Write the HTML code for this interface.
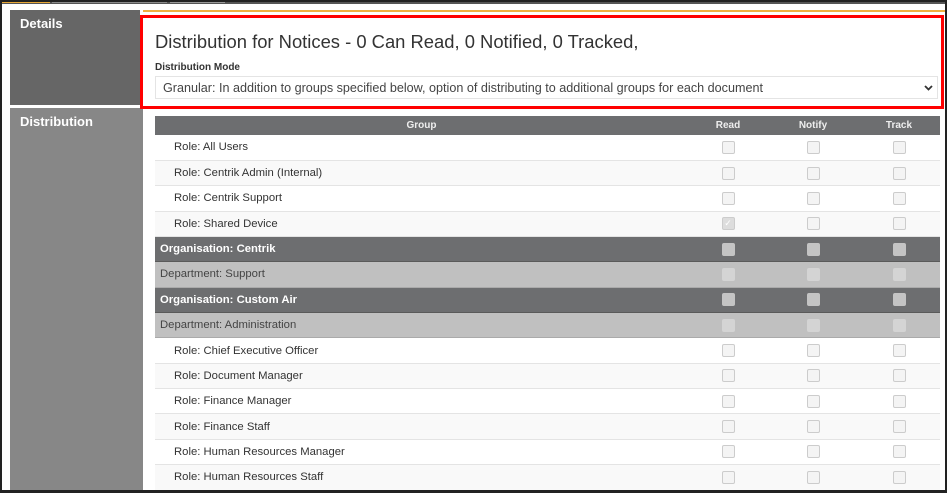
<!DOCTYPE html>
<html><head><style>
body{margin:0;width:947px;height:492px;overflow:hidden;background:#fff;font-family:"Liberation Sans",Arial,sans-serif;position:relative}
.frame{position:absolute;left:0;top:0;width:943px;height:488px;border:2px solid #222;border-bottom:3px solid #222}
.abs{position:absolute}
.lbl{color:#fff;font-weight:bold;font-size:13px;padding:6px 0 0 10px;box-sizing:border-box}
table{border-collapse:collapse;position:absolute;left:155px;top:116px;width:785px;font-size:11.3px;color:#333}
th{background:#6d6e70;color:#eee;font-weight:bold;height:19px;font-size:10px;padding:0}
td{height:25.36px;padding:0;border-bottom:1px solid #e4e4e4;box-sizing:border-box}
td.n{padding-left:19px}
tr:nth-child(odd) td{background:#f9f9f9}
tr.org td{background:#6d6e70;color:#fff;font-weight:bold;border-bottom:1px solid #5a5a5a}
tr.dep td{background:#c0c0c0;color:#444;border-bottom:1px solid #aaa}
tr.org td.n,tr.dep td.n{padding-left:5px}
td.c{text-align:center}
.cb{display:inline-block;width:11px;height:11px;border:1px solid #ccc;border-radius:2px;background:#f4f4f4;vertical-align:middle}
tr.org .cb{background:#c4c4c4;border-color:#c4c4c4}
tr.dep .cb{background:#d4d4d4;border-color:#d4d4d4}
.chk{background:#ddd;color:#fff;font-size:9px;line-height:11px;text-align:center}
</style></head><body>
<div class="abs" style="left:0;top:0;width:947px;height:4px;background:#555"></div>
<div class="abs" style="left:2px;top:0;width:48px;height:3px;background:#e8a735"></div>
<div class="abs" style="left:52px;top:0;width:115px;height:3px;background:#8a8a8a"></div>
<div class="abs" style="left:170px;top:0;width:55px;height:3px;background:#999"></div>
<div class="abs lbl" style="left:10px;top:10px;width:130px;height:95px;background:#666">Details</div>
<div class="abs lbl" style="left:10px;top:108px;width:133px;height:384px;background:#878787">Distribution</div>
<div class="abs" style="left:143px;top:10px;width:802px;height:2px;background:#f0b040"></div>
<div class="abs" style="left:140px;top:15px;width:798px;height:88px;border:3px solid #f00"></div>
<div class="abs" style="left:155px;top:31px;font-size:18.4px;color:#333">Distribution for Notices - 0 Can Read, 0 Notified, 0 Tracked,</div>
<div class="abs" style="left:155px;top:62px;font-size:10px;font-weight:bold;color:#333">Distribution Mode</div>
<div class="abs" style="left:155px;top:76px;width:783px;height:23px;border:1px solid #e4e4e4;box-sizing:border-box;font-size:12.6px;color:#444;padding:4px 0 0 7px">Granular: In addition to groups specified below, option of distributing to additional groups for each document<svg style="position:absolute;right:4px;top:8px" width="9" height="6" viewBox="0 0 9 6"><path d="M1 1L4.5 4.5L8 1" stroke="#333" stroke-width="1.8" fill="none"/></svg></div>
<table>
<tr><th>Group</th><th style="width:80px">Read</th><th style="width:90px">Notify</th><th style="width:82px">Track</th></tr>
<tr><td class="n">Role: All Users</td><td class="c"><span class="cb"></span></td><td class="c"><span class="cb"></span></td><td class="c"><span class="cb"></span></td></tr>
<tr><td class="n">Role: Centrik Admin (Internal)</td><td class="c"><span class="cb"></span></td><td class="c"><span class="cb"></span></td><td class="c"><span class="cb"></span></td></tr>
<tr><td class="n">Role: Centrik Support</td><td class="c"><span class="cb"></span></td><td class="c"><span class="cb"></span></td><td class="c"><span class="cb"></span></td></tr>
<tr><td class="n">Role: Shared Device</td><td class="c"><span class="cb chk">✓</span></td><td class="c"><span class="cb"></span></td><td class="c"><span class="cb"></span></td></tr>
<tr class="org"><td class="n">Organisation: Centrik</td><td class="c"><span class="cb"></span></td><td class="c"><span class="cb"></span></td><td class="c"><span class="cb"></span></td></tr>
<tr class="dep"><td class="n">Department: Support</td><td class="c"><span class="cb"></span></td><td class="c"><span class="cb"></span></td><td class="c"><span class="cb"></span></td></tr>
<tr class="org"><td class="n">Organisation: Custom Air</td><td class="c"><span class="cb"></span></td><td class="c"><span class="cb"></span></td><td class="c"><span class="cb"></span></td></tr>
<tr class="dep"><td class="n">Department: Administration</td><td class="c"><span class="cb"></span></td><td class="c"><span class="cb"></span></td><td class="c"><span class="cb"></span></td></tr>
<tr><td class="n">Role: Chief Executive Officer</td><td class="c"><span class="cb"></span></td><td class="c"><span class="cb"></span></td><td class="c"><span class="cb"></span></td></tr>
<tr><td class="n">Role: Document Manager</td><td class="c"><span class="cb"></span></td><td class="c"><span class="cb"></span></td><td class="c"><span class="cb"></span></td></tr>
<tr><td class="n">Role: Finance Manager</td><td class="c"><span class="cb"></span></td><td class="c"><span class="cb"></span></td><td class="c"><span class="cb"></span></td></tr>
<tr><td class="n">Role: Finance Staff</td><td class="c"><span class="cb"></span></td><td class="c"><span class="cb"></span></td><td class="c"><span class="cb"></span></td></tr>
<tr><td class="n">Role: Human Resources Manager</td><td class="c"><span class="cb"></span></td><td class="c"><span class="cb"></span></td><td class="c"><span class="cb"></span></td></tr>
<tr><td class="n">Role: Human Resources Staff</td><td class="c"><span class="cb"></span></td><td class="c"><span class="cb"></span></td><td class="c"><span class="cb"></span></td></tr>
</table>
<div class="frame"></div>
</body></html>
